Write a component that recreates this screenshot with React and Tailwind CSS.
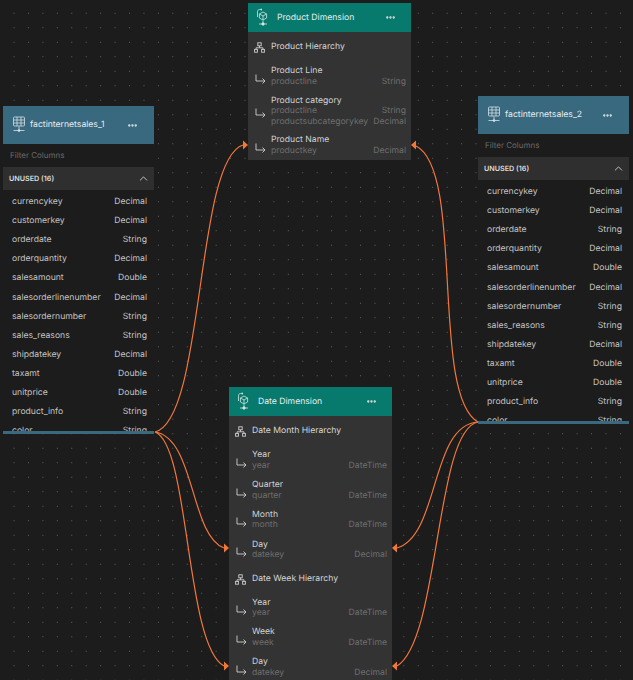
import { ChevronUp, MoreHorizontal } from "lucide-react";

const sansFont = "font-['Inter',sans-serif] [text-rendering:geometricPrecision] antialiased";

const factColumns = [
  ["currencykey", "Decimal"],
  ["customerkey", "Decimal"],
  ["orderdate", "String"],
  ["orderquantity", "Decimal"],
  ["salesamount", "Double"],
  ["salesorderlinenumber", "Decimal"],
  ["salesordernumber", "String"],
  ["sales_reasons", "String"],
  ["shipdatekey", "Decimal"],
  ["taxamt", "Double"],
  ["unitprice", "Double"],
  ["product_info", "String"],
  ["color", "String"],
];

function TableIcon() {
  return (
    <svg width="14" height="18" viewBox="0 0 14 18" fill="none" stroke="#d5e0e5" strokeWidth="0.8" className="shrink-0">
      <rect x="1.5" y="1" width="11" height="9" rx="1" />
      <path d="M1.5 4h11M1.5 7h11M5 1v9M9 1v9" />
      <path d="M7 10.5v3M1.5 14.5h11" />
      <circle cx="7" cy="14.5" r="1" fill="#d5e0e5" />
    </svg>
  );
}

function CubeIcon() {
  return (
    <svg width="14" height="19" viewBox="0 0 14 19" fill="none" stroke="#d3e8e5" strokeWidth="0.8" className="shrink-0">
      <path d="M7 4l3.6 2v4L7 12l-3.6-2V6z" />
      <path d="M3.4 6L7 8l3.6-2M7 8v4" />
      <path d="M1.5 9V3.5C1.5 2.4 2.4 1.5 3.5 1.5H6M4.8 0.5L6 1.5 4.8 2.6" />
      <path d="M7 12.5v2.5M3 16h8" />
      <circle cx="7" cy="16" r="1.2" fill="#d3e8e5" />
    </svg>
  );
}

function HierarchyIcon() {
  return (
    <svg width="11" height="11" viewBox="0 0 11 11" fill="none" stroke="#d0d0d0" strokeWidth="0.9" className="shrink-0">
      <rect x="3.8" y="0.8" width="3.4" height="3" />
      <rect x="0.6" y="7.4" width="2.8" height="2.8" />
      <rect x="7.6" y="7.4" width="2.8" height="2.8" />
      <path d="M5.5 3.8v2M2 7.4V5.8h7v1.6" />
    </svg>
  );
}

function LevelArrow() {
  return (
    <svg width="11" height="10" viewBox="0 0 11 10" fill="none" stroke="#cfcfcf" strokeWidth="0.9" className="mr-[5px] mt-[4px] shrink-0">
      <path d="M1 0.5V7h9M7.5 4.5L10 7 7.5 9.5" />
    </svg>
  );
}

function TableNode({ title, className }) {
  return (
    <div className={`absolute flex w-[151px] flex-col overflow-hidden bg-[#1c1c1c] ${className}`}>
      <div className="flex h-[38px] shrink-0 items-center bg-[#39697f] pl-[9px] pr-[16px]">
        <TableIcon />
        <span className="ml-[4px] mt-[1px] flex-1 text-[8.64px] text-[#e6edf0]">{title}</span>
        <MoreHorizontal size={11} strokeWidth={3} color="#e8e8e8" />
      </div>
      <div className="flex h-[23px] shrink-0 items-center px-[7px] pb-[2px] text-[8px] text-[#6a6a6a]">Filter Columns</div>
      <div className="flex h-[23px] shrink-0 items-center justify-between bg-[#2f2f2f] pl-[6px] pr-[4px] text-[7.2px] font-semibold text-[#dedede]">
        <span className="mt-[1px]">UNUSED (16)</span>
        <ChevronUp size={13} strokeWidth={1.5} color="#e2e2e2" />
      </div>
      <div className="h-[241px] shrink-0 overflow-hidden pt-[3px]">
        {factColumns.map(([name, type]) => (
          <div key={name} className="flex h-[19.1px] items-center justify-between pl-[9px] pr-[7px] text-[8.64px] text-[#c4c4c4]">
            <span>{name}</span>
            <span>{type}</span>
          </div>
        ))}
      </div>
      <div className="h-[3px] shrink-0 bg-[#39697f]" />
    </div>
  );
}

function HierarchyRow({ label, className = "h-[29px]" }) {
  return (
    <div className={`flex items-center gap-[6px] pl-[6px] pt-[2px] text-[8.64px] text-[#d6d6d6] ${className}`}>
      <HierarchyIcon />
      <span>{label}</span>
    </div>
  );
}

function LevelRow({ name, columns, className = "h-[29.8px]" }) {
  return (
    <div className={`flex items-center pl-[7px] pr-[5px] pt-[2px] ${className}`}>
      <LevelArrow />
      <div className="min-w-0 flex-1 text-[8.64px] leading-[10.4px]">
        <div className="text-[#d2d2d2]">{name}</div>
        {columns.map(([key, type]) => (
          <div key={key} className="flex justify-between text-[#6e6e6e]">
            <span>{key}</span>
            <span>{type}</span>
          </div>
        ))}
      </div>
    </div>
  );
}

function DimensionNode({ title, className, children }) {
  return (
    <div className={`absolute w-[163px] bg-[#333333] ${className}`}>
      <div className="flex h-[29px] items-center bg-[#08796d] pl-[8px] pr-[15px]">
        <CubeIcon />
        <span className="ml-[7px] mt-[2px] flex-1 text-[8.64px] text-[#e3efed]">{title}</span>
        <MoreHorizontal size={11} strokeWidth={3} color="#e8e8e8" />
      </div>
      {children}
    </div>
  );
}

function Edges() {
  const stroke = "#f2773a";
  return (
    <svg width="633" height="680" viewBox="0 0 633 680" fill="none" className="absolute left-0 top-0">
      <g stroke={stroke} strokeWidth="1.2">
        <path d="M155 432C205 420 195 160 243 145" />
        <path d="M155 432C195 438 190 535 224 548" />
        <path d="M155 432C190 445 185 645 224 666" />
        <path d="M478 422C430 395 465 170 416 146" />
        <path d="M478 422C430 425 440 535 397 548" />
        <path d="M478 422C435 430 440 640 397 666" />
      </g>
      <g fill={stroke}>
        <path d="M248 145l-5-4.5v9z" />
        <path d="M229 548l-5-4.5v9z" />
        <path d="M229 666l-5-4.5v9z" />
        <path d="M411 145l5-4.5v9z" />
        <path d="M392 548l5-4.5v9z" />
        <path d="M392 666l5-4.5v9z" />
      </g>
    </svg>
  );
}

export default function App() {
  return (
    <div className={`relative h-[680px] w-[633px] overflow-hidden bg-[#1c1c1c] bg-[radial-gradient(circle,#666666_0.6px,transparent_0.8px)] bg-[size:14.45px_14.5px] bg-[position:6.8px_6px] ${sansFont}`}>
      <Edges />
      <TableNode title="factinternetsales_1" className="left-[3px] top-[106px]" />
      <TableNode title="factinternetsales_2" className="left-[478px] top-[96px]" />

      <DimensionNode title="Product Dimension" className="left-[248px] top-[3px] h-[157px]">
        <HierarchyRow label="Product Hierarchy" />
        <LevelRow name="Product Line" columns={[["productline", "String"]]} />
        <LevelRow name="Product category" columns={[["productline", "String"], ["productsubcategorykey", "Decimal"]]} className="h-[39px]" />
        <LevelRow name="Product Name" columns={[["productkey", "Decimal"]]} />
      </DimensionNode>

      <DimensionNode title="Date Dimension" className="left-[229px] top-[387px] h-[293px] overflow-hidden">
        <HierarchyRow label="Date Month Hierarchy" />
        <LevelRow name="Year" columns={[["year", "DateTime"]]} />
        <LevelRow name="Quarter" columns={[["quarter", "DateTime"]]} />
        <LevelRow name="Month" columns={[["month", "DateTime"]]} />
        <LevelRow name="Day" columns={[["datekey", "Decimal"]]} />
        <HierarchyRow label="Date Week Hierarchy" className="h-[28px]" />
        <LevelRow name="Year" columns={[["year", "DateTime"]]} />
        <LevelRow name="Week" columns={[["week", "DateTime"]]} />
        <LevelRow name="Day" columns={[["datekey", "Decimal"]]} />
      </DimensionNode>
    </div>
  );
}
